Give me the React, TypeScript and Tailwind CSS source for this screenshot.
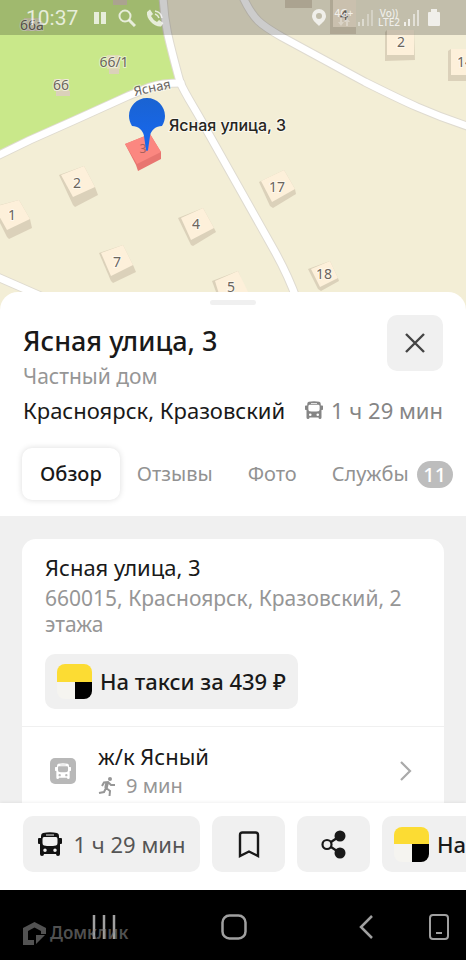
import type { ReactNode } from "react";

type House = {
  label: string;
  roof: string;
  wall: string;
  x: number;
  y: number;
};

const houses: House[] = [
  { label: "2", roof: "61,175 84,166 95,187 73,197", wall: "59,175 73,205 75,207 98,195 95,187 84,166", x: 77, y: 188 },
  { label: "1", roof: "-6,207 19,200 30,219 7,230", wall: "-8,207 7,237 9,239 32,228 30,219 19,200", x: 12, y: 220 },
  { label: "7", roof: "101,253 123,245 133,265 111,276", wall: "99,253 111,281 113,283 136,272 133,265 123,245", x: 117, y: 267 },
  { label: "4", roof: "181,218 203,208 214,228 191,240", wall: "178,218 191,245 193,246 216,232 214,228 203,208", x: 196, y: 229 },
  { label: "5", roof: "215,281 238,271 250,296 222,304", wall: "212,281 222,308 250,300 238,271", x: 231, y: 292 },
  { label: "17", roof: "261,181 284,170 295,189 272,202", wall: "259,182 270,206 273,208 296,194 295,189 284,170", x: 277, y: 192 },
  { label: "18", roof: "311,269 330,261 338,278 320,287", wall: "308,269 318,289 321,291 339,281 338,278 330,261", x: 324, y: 279 },
  { label: "2", roof: "387,30 414,30 414,55 387,55", wall: "385,32 387,30 414,30 415,60 385,61", x: 401, y: 47 },
  { label: "14", roof: "451,49 480,49 480,75 451,75", wall: "448,51 451,49 480,49 480,81 448,81", x: 465, y: 67 },
  { label: "4", roof: "333,0 356,0 356,27 333,27", wall: "330,0 356,0 356,34 330,34", x: 344, y: 20 },
];

const sheds: House[] = [
  { label: "66а", roof: "24,18 40,18 40,27 24,27", wall: "25,27 40,27 40,31 25,31", x: 32, y: 30 },
  { label: "66", roof: "54,79 69,79 69,91 54,91", wall: "56,91 70,91 70,96 56,96", x: 61, y: 90 },
  { label: "66/1", roof: "107,55 120,55 120,69 107,69", wall: "109,69 119,69 119,74 109,74", x: 114, y: 67 },
];

const roads = [
  "M-5 157 L30 140 L75 120 L128 96 L150 87 Q162 83 181 83",
  "M163 -5 C164 22 168 38 180 82 C186 96 196 110 206 129 L274 250 Q288 275 297 300",
  "M242 -5 C253 20 261 25 282 37 L365 82 C405 102 430 114 470 127",
  "M-5 276 L50 300",
];

function CityMap() {
  return (
    <svg
      className="h-full w-full font-['Noto_Sans',sans-serif]"
      viewBox="0 0 466 310"
      preserveAspectRatio="xMidYMid slice"
      aria-label="Карта"
    >
      <rect width="466" height="310" fill="#f3eed6" />
      <path d="M0 0 H163 Q166 34 179 82 Q160 83 145 89 L0 153 Z" fill="#c9e88a" />
      <g fill="none" strokeLinecap="round" strokeLinejoin="round">
        {roads.map((d) => (
          <path key={d} d={d} stroke="#dfdbd0" strokeWidth="9" />
        ))}
        {roads.map((d) => (
          <path key={d} d={d} stroke="#ffffff" strokeWidth="7" />
        ))}
      </g>
      <path d="M113 0 H127 V5 H113 Z M285 0 H312 V8 H285 Z" fill="#d6ccb5" />
      {[...houses, ...sheds].map((h) => (
        <g key={`${h.label}-${h.x}`}>
          <polygon points={h.wall} fill="#dbd1ba" />
          <polygon points={h.roof} fill={sheds.includes(h) ? "#dfdcb6" : "#fdf0da"} />
        </g>
      ))}
      <g
        fill="#6b655d"
        fontSize="14"
        textAnchor="middle"
        stroke="#ffffff"
        strokeWidth="2"
        strokeOpacity="0.5"
        paintOrder="stroke"
      >
        {[...houses, ...sheds].map((h) => (
          <text key={`${h.label}-${h.x}`} x={h.x} y={h.y}>
            {h.label}
          </text>
        ))}
        <text fontSize="13" transform="translate(153 92) rotate(-12)">
          Ясная
        </text>
      </g>

      <polygon points="125,144 150,134 161,152 161,159 138,171 136,165" fill="#e87570" />
      <polygon points="125,144 150,134 161,152 137,164" fill="#fb8780" />
      <text x="143" y="153" fontSize="12" textAnchor="middle" fill="#a8605c">
        3
      </text>
      <defs>
        <linearGradient id="pin" x1="0" y1="0" x2="0" y2="1">
          <stop offset="0" stopColor="#1a63d2" />
          <stop offset="1" stopColor="#1668f2" />
        </linearGradient>
      </defs>
      <path
        d="M147 98 C137 98 129 106 129 116 C129 119 130 123 132 126 C138 126 143 130 144 136 L146 150 Q147 152 148 150 L150 136 C151 130 156 126 162 126 C164 123 165 119 165 116 C165 106 157 98 147 98 Z"
        fill="url(#pin)"
      />
      <text
        x="169"
        y="131"
        fontSize="16"
        fontWeight="500"
        fill="#262522"
        stroke="#ffffff"
        strokeWidth="2"
        strokeOpacity="0.6"
        paintOrder="stroke"
        className="font-[Inter,sans-serif]"
      >
        Ясная улица, 3
      </text>
    </svg>
  );
}

function Bars({ className }: { className?: string }) {
  return (
    <svg className={className} viewBox="0 0 16 16" fill="currentColor" aria-hidden="true">
      <rect x="0" y="12" width="2" height="4" />
      <rect x="4" y="9" width="2" height="7" />
      <rect x="9" y="4" width="2" height="12" opacity="0.7" />
      <rect x="13" y="0" width="2" height="16" opacity="0.7" />
    </svg>
  );
}

function StatusBar() {
  return (
    <div className="absolute inset-x-0 top-0 flex h-[35px] items-center justify-between bg-black/20 pr-[26px] pl-[26px] text-white/75">
      <div className="flex items-center">
        <span className="font-[Roboto,sans-serif] text-[21px] leading-6">10:37</span>
        <svg className="ml-4 h-3 w-3" viewBox="0 0 12 12" fill="currentColor" aria-hidden="true">
          <path d="M0 0h5v12H0zM7 0h5v12H7z" />
        </svg>
        <svg className="ml-3 h-[18px] w-[18px]" viewBox="0 0 18 18" fill="none" stroke="currentColor" strokeWidth="2" aria-hidden="true">
          <circle cx="7" cy="7" r="5.5" />
          <path d="M11 11l6 6" strokeWidth="3" />
        </svg>
        <svg className="ml-[10px] h-[18px] w-[18px]" viewBox="0 0 18 18" aria-hidden="true">
          <path
            d="M1 3 L4 0.500 L7 5 L5 7 Q7 11 11 13 L13 11 L17.500 14 L15 17.500 C8 18 0 10 1 3 Z"
            fill="currentColor"
          />
          <path d="M9 2 Q15 3 16 9 M9 5 Q12 6 13 9" fill="none" stroke="currentColor" strokeWidth="1.500" />
        </svg>
      </div>
      <div className="flex items-center font-['Noto_Sans',sans-serif] text-[10px] leading-[9px] font-medium">
        <svg className="h-[17px] w-[14px]" viewBox="0 0 14 17" fill="currentColor" aria-hidden="true">
          <path fillRule="evenodd" d="M7 0a7 7 0 0 1 7 7c0 4-4 7-7 10C4 14 0 11 0 7a7 7 0 0 1 7-7zm0 4a3 3 0 1 0 0 6 3 3 0 0 0 0-6z" />
        </svg>
        <span className="ml-2 flex h-[18px] w-5 flex-col items-center">
          4G+
          <svg className="h-2 w-3" viewBox="0 0 12 8" fill="currentColor" aria-hidden="true">
            <path d="M3 8L0 4h2V0h2v4h2zM9 0l3 4h-2v4H8V4H6z" opacity="0.4" />
          </svg>
        </span>
        <Bars className="ml-1 h-4 w-4 opacity-60" />
        <span className="ml-1 flex flex-col items-center">
          <span>Vo))</span>
          <span>LTE2</span>
        </span>
        <Bars className="ml-1 h-4 w-4" />
        <svg className="ml-2 h-[17px] w-3" viewBox="0 0 12 17" fill="currentColor" aria-hidden="true">
          <path d="M3 0h6v3h2a1 1 0 0 1 1 1v12a1 1 0 0 1-1 1H1a1 1 0 0 1-1-1V4a1 1 0 0 1 1-1h2z" />
        </svg>
      </div>
    </div>
  );
}

function BusIcon({ className }: { className?: string }) {
  return (
    <svg className={className} viewBox="0 0 24 24" fill="currentColor" aria-hidden="true">
      <path
        fillRule="evenodd"
        d="M5 1Q12 -0.500 19 1Q21 1.500 21 4V6H23Q24 6 24 7V11Q24 12 23 12H22V22Q22 24 20 24Q18 24 18 22H6Q6 24 4 24Q2 24 2 22V12H1Q0 12 0 11V7Q0 6 1 6H3V4Q3 1.500 5 1ZM8 2.500V3.500H16V2.500ZM6 5Q4.500 5 4.500 7V11Q4.500 13 6 13.500Q12 14.500 18 13.500Q19.500 13 19.500 11V7Q19.500 5 18 5ZM7 16.500A1.700 1.700 0 1 0 7 20A1.700 1.700 0 0 0 7 16.500ZM17 16.500A1.700 1.700 0 1 0 17 20A1.700 1.700 0 0 0 17 16.500Z"
      />
    </svg>
  );
}

function TaxiIcon() {
  return (
    <span className="grid h-[35px] w-[35px] shrink-0 grid-cols-2 grid-rows-2 overflow-hidden rounded-lg bg-[#f5f4f0]">
      <span className="col-span-2 bg-[#fcdc33]" />
      <span />
      <span className="bg-black" />
    </span>
  );
}

function ActionButton({ label, className, children }: { label?: string; className: string; children: ReactNode }) {
  return (
    <button
      type="button"
      aria-label={label}
      className={`flex h-14 shrink-0 items-center rounded-[10px] bg-[#f0f0f0] ${className}`}
    >
      {children}
    </button>
  );
}

function PlaceHeader() {
  return (
    <header className="shrink-0 px-[23px]">
      <div className="mx-auto mt-2 h-[5px] w-[46px] rounded-full bg-[#f0f0f0]" />
      <div className="mt-[10px] flex items-start justify-between">
        <div>
          <h1 className="mt-2 text-[27px] leading-9 font-medium">Ясная улица, 3</h1>
          <p className="text-[21px] leading-[34px] text-[#969696]">Частный дом</p>
        </div>
        <button
          type="button"
          aria-label="Закрыть"
          className="flex h-14 w-14 items-center justify-center rounded-[10px] bg-[#f0f0f0] text-[#444444]"
        >
          <svg className="h-5 w-5" viewBox="0 0 20 20" fill="none" stroke="currentColor" strokeWidth="2.400" aria-hidden="true">
            <path d="M1 1l18 18M19 1L1 19" />
          </svg>
        </button>
      </div>
      <div className="flex items-center justify-between text-[22px] leading-[34px] whitespace-nowrap">
        <span>Красноярск, Кразовский</span>
        <span className="flex items-center gap-2 text-[#858585]">
          <BusIcon className="h-[18px] w-[18px]" />1 ч 29 мин
        </span>
      </div>
    </header>
  );
}

function Tabs() {
  return (
    <nav className="mt-[21px] mb-4 flex shrink-0 items-center pl-[22px] text-[20px] whitespace-nowrap text-[#929292]">
      <button
        type="button"
        className="h-[52px] shrink-0 rounded-[10px] bg-white px-[18px] font-medium text-[#191919] shadow-[0_0_6px_rgba(0,0,0,0.14)]"
      >
        Обзор
      </button>
      <button type="button" className="ml-[17px]">Отзывы</button>
      <button type="button" className="ml-[35px]">Фото</button>
      <button type="button" className="ml-[35px] flex items-center gap-2">
        Службы
        <span className="h-[27px] w-9 rounded-full bg-[#bdbdbd] text-center leading-[27px] font-medium text-white">11</span>
      </button>
    </nav>
  );
}

function PlaceDetails() {
  return (
    <div className="min-h-0 flex-1 overflow-hidden bg-[#f0f0f0] px-[22px] pt-[23px]">
      <section className="rounded-t-[14px] bg-white pt-3 pb-10">
        <div className="px-[23px]">
          <h2 className="text-[22px] leading-8">Ясная улица, 3</h2>
          <p className="mt-[2px] text-[21px] leading-[26px] text-[#969696]">
            660015, Красноярск, Кразовский, 2 этажа
          </p>
          <button
            type="button"
            className="mt-[17px] flex h-[55px] items-center gap-2 rounded-[10px] bg-[#f0f0f0] px-3 text-[22px] font-medium"
          >
            <TaxiIcon />
            На такси за 439 ₽
          </button>
        </div>
        <a href="#stop" className="mt-[17px] flex items-center border-t border-[#f0f0f0] px-7 pt-[14px]">
          <span className="flex h-[26px] w-[26px] items-center justify-center rounded-[5px] bg-[#b8b8b8] text-white">
            <BusIcon className="h-4 w-4" />
          </span>
          <span className="ml-[22px] flex-1">
            <span className="block text-[22px] leading-[30px]">ж/к Ясный</span>
            <span className="flex items-center gap-2 text-[20px] leading-[30px] text-[#969696]">
              <svg className="h-[19px] w-5" viewBox="0 0 20 19" fill="none" stroke="currentColor" strokeWidth="2" aria-hidden="true">
                <circle cx="12" cy="2" r="2" fill="currentColor" stroke="none" />
                <path d="M4 9L6 5.500L10 5L13 8H17M10 5L8 11L12 14L11.500 19M8 11L6 15L1 16" />
                <path d="M9 6L8 11" strokeWidth="3.500" />
              </svg>
              9 мин
            </span>
          </span>
          <svg className="mr-1 h-5 w-3" viewBox="0 0 12 20" fill="none" stroke="#aaaaaa" strokeWidth="2.200" aria-hidden="true">
            <path d="M1 1l9 9-9 9" />
          </svg>
        </a>
      </section>
    </div>
  );
}

function ActionBar() {
  return (
    <div className="z-10 flex shrink-0 gap-3 overflow-hidden bg-white pt-[13px] pb-[18px] pl-[23px] text-[22px] whitespace-nowrap shadow-[0_-1px_3px_rgba(0,0,0,0.06)]">
      <ActionButton className="w-[177px] justify-center gap-3 text-[#555555]">
        <BusIcon className="h-6 w-6 text-[#111111]" />1 ч 29 мин
      </ActionButton>
      <ActionButton label="Сохранить" className="w-[73px] justify-center">
        <svg className="h-[27px] w-[22px]" viewBox="0 0 22 27" fill="none" stroke="currentColor" strokeWidth="2.400" aria-hidden="true">
          <path d="M2 25V4Q2 1.500 4.500 1.500H17.500Q20 1.500 20 4V25L11 20.500Z" />
        </svg>
      </ActionButton>
      <ActionButton label="Поделиться" className="w-[73px] justify-center">
        <svg className="h-[29px] w-[25px]" viewBox="0 0 25 29" fill="none" stroke="currentColor" strokeWidth="2.200" aria-hidden="true">
          <path d="M10 12L16 8M10 17L16 21" />
          <circle cx="6" cy="14.500" r="4.500" />
          <circle cx="19" cy="6" r="5.500" fill="currentColor" stroke="none" />
          <circle cx="19" cy="23" r="5.500" fill="currentColor" stroke="none" />
        </svg>
      </ActionButton>
      <ActionButton className="gap-2 px-3 font-medium">
        <TaxiIcon />
        На такси за 439 ₽
      </ActionButton>
    </div>
  );
}

function SystemNav() {
  return (
    <div className="relative flex h-[70px] shrink-0 items-center bg-black pt-1 pr-[17px] pl-[92px] text-[#a0a0a0]">
      <button type="button" aria-label="Недавние">
        <svg className="h-[26px] w-6" viewBox="0 0 24 26" stroke="currentColor" strokeWidth="2.500" aria-hidden="true">
          <path d="M2 1v24M12 1v24M22 1v24" />
        </svg>
      </button>
      <button type="button" aria-label="Главный экран" className="mx-auto">
        <svg className="h-[26px] w-[26px]" viewBox="0 0 26 26" fill="none" stroke="currentColor" strokeWidth="2.500" aria-hidden="true">
          <rect x="1.500" y="1.500" width="23" height="23" rx="7" />
        </svg>
      </button>
      <button type="button" aria-label="Назад" className="ml-2">
        <svg className="h-6 w-[14px]" viewBox="0 0 14 24" fill="none" stroke="currentColor" strokeWidth="2.500" aria-hidden="true">
          <path d="M13 1L2 12l11 11" />
        </svg>
      </button>
      <button type="button" aria-label="Одна рука" className="ml-14">
        <svg className="h-[26px] w-5" viewBox="0 0 20 26" fill="none" stroke="currentColor" strokeWidth="2" aria-hidden="true">
          <rect x="1" y="1" width="18" height="24" rx="3" />
          <path d="M7 19h6" />
        </svg>
      </button>
      <div className="absolute top-[31px] left-[23px] flex items-center gap-1 text-[#888888]/60">
        <svg className="h-[23px] w-[23px]" viewBox="0 0 23 23" aria-hidden="true">
          <path
            d="M0 6L11.500 0L23 6V12H18V9L11.500 5.500L5 9V18H11V23H0ZM13 13H22L13 22Z"
            fill="currentColor"
          />
        </svg>
        <span className="text-[17px] leading-6 font-semibold">Домклик</span>
      </div>
    </div>
  );
}

export default function App() {
  return (
    <main className="flex h-screen flex-col overflow-hidden bg-black font-['Noto_Sans','Open_Sans',sans-serif] text-[#191919]">
      <div className="relative h-[310px] shrink-0 overflow-hidden">
        <CityMap />
        <StatusBar />
      </div>
      <div className="relative -mt-[18px] flex min-h-0 flex-1 flex-col overflow-hidden rounded-t-[18px] bg-white">
        <PlaceHeader />
        <Tabs />
        <PlaceDetails />
      </div>
      <ActionBar />
      <SystemNav />
    </main>
  );
}
